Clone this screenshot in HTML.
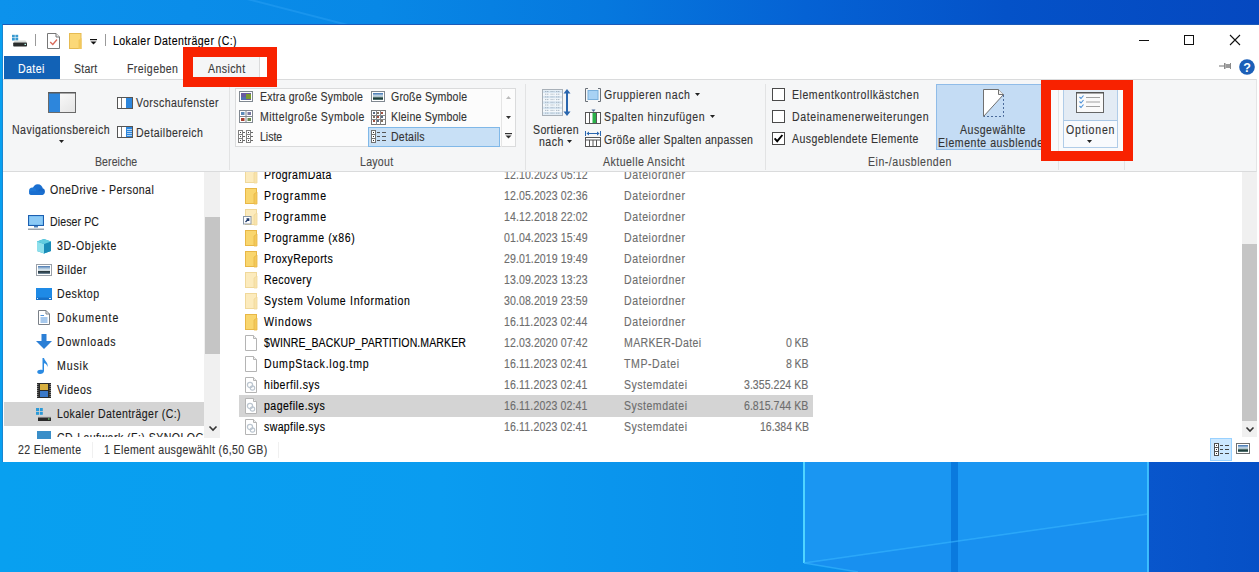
<!DOCTYPE html>
<html><head><meta charset="utf-8">
<style>
*{margin:0;padding:0;box-sizing:border-box}
html,body{width:1259px;height:572px;overflow:hidden}
body{position:relative;font-family:"Liberation Sans",sans-serif;font-size:12px;
 background:linear-gradient(90deg,#0a90ea 0%,#0a86e4 35%,#0466d8 60%,#0350c8 80%,#0444bc 100%);}
.abs{position:absolute}
.t{position:absolute;white-space:nowrap;line-height:16px;font-size:12px;transform-origin:0 0;-webkit-text-stroke:0.12px currentColor}
svg{position:absolute;overflow:visible}
</style></head><body>
<!-- desktop bottom -->
<svg style="left:0;top:0" width="1259" height="572" viewBox="0 0 1259 572">
<defs>
<linearGradient id="dtop" x1="0" y1="0" x2="1" y2="0">
<stop offset="0" stop-color="#0c92ec"/><stop offset="0.3" stop-color="#0888e6"/><stop offset="0.48" stop-color="#0678de"/>
<stop offset="0.64" stop-color="#0562d4"/><stop offset="0.8" stop-color="#0452c8"/><stop offset="1" stop-color="#0548c0"/>
</linearGradient>
<linearGradient id="dbot" x1="0" y1="0" x2="1" y2="0">
<stop offset="0" stop-color="#08a0f0"/><stop offset="0.35" stop-color="#0a9cf0"/><stop offset="0.62" stop-color="#0a8eea"/><stop offset="1" stop-color="#0a88e8"/>
</linearGradient>
<linearGradient id="dright" x1="0" y1="0" x2="1" y2="0">
<stop offset="0" stop-color="#0856cc"/><stop offset="1" stop-color="#0650c6"/>
</linearGradient>
</defs>
<rect x="0" y="0" width="1259" height="30" fill="url(#dtop)"/>
<path d="M255 0 L348 24 L340 24 L247 0 Z" fill="#2aa0f4" opacity="0.5"/>
<rect x="0" y="455" width="1259" height="117" fill="url(#dbot)"/>
<rect x="0" y="24" width="3" height="440" fill="#07a0f0"/>
<rect x="1148" y="455" width="111" height="117" fill="url(#dright)"/>
<path d="M804 455 H1148 V514 L804 563 Z" fill="#1a96f2"/>
<path d="M804 563 L1148 514 V572 H860 Z" fill="#1890f0"/>
<rect x="951" y="455" width="7" height="117" fill="#0a7ade"/>
<path d="M804 455 V563" stroke="#50d4ff" stroke-width="2" fill="none"/>
<path d="M804 563 L1148 514" stroke="#3ab8ff" stroke-width="1.5" fill="none" opacity="0.6"/>
<path d="M804 563 L858 572" stroke="#3ab8ff" stroke-width="1.5" fill="none" opacity="0.6"/>
<rect x="1147" y="455" width="2" height="117" fill="#40c4ff" opacity="0.9"/>
</svg>
<!-- window -->
<div class="abs" style="left:2px;top:24px;width:1257px;height:438px;background:#fff;border-left:1px solid #1a86d0;border-top:1px solid #1c5ab8"></div>
<!-- tabs -->
<div class="abs" style="left:4px;top:56px;width:56px;height:23px;background:#1262b6"></div>
<div class="abs" style="left:192px;top:57px;width:68px;height:22px;background:#f5f6f7;border-right:1px solid #dadbdc"></div>
<!-- ribbon -->
<div class="abs" style="left:3px;top:79px;width:1254px;height:93px;background:#f5f6f7;border-top:1px solid #dadbdc;border-bottom:1px solid #dadbdc;border-right:1px solid #e4e5e6"></div>
<!-- group separators -->
<div class="abs" style="left:229px;top:84px;width:1px;height:86px;background:#e2e3e4"></div>
<div class="abs" style="left:525px;top:84px;width:1px;height:86px;background:#e2e3e4"></div>
<div class="abs" style="left:765px;top:84px;width:1px;height:86px;background:#e2e3e4"></div>
<div class="abs" style="left:1058px;top:84px;width:1px;height:86px;background:#e2e3e4"></div>
<div class="abs" style="left:1124px;top:84px;width:1px;height:86px;background:#e2e3e4"></div>
<!-- layout gallery -->
<div class="abs" style="left:235px;top:88px;width:281px;height:59px;background:#fcfcfc;border:1px solid #dadbdc"></div>
<div class="abs" style="left:501px;top:88px;width:1px;height:59px;background:#e5e5e5"></div>
<div class="abs" style="left:368px;top:127px;width:132px;height:20px;background:#c8e0f6;border:1px solid #80b8e8"></div>
<!-- Ausgewählte button -->
<div class="abs" style="left:936px;top:84px;width:114px;height:66px;background:#c4dcf4;border:1px solid #90bce8"></div>
<!-- Optionen button -->
<div class="abs" style="left:1051px;top:90px;width:72px;height:61px;background:#f9fafb"></div>
<div class="abs" style="left:1058px;top:90px;width:1px;height:61px;background:#e4e5e6"></div>
<div class="abs" style="left:1063px;top:86px;width:55px;height:62px;background:#f8fafd;border:1px solid #b0cce8"></div>
<div class="abs" style="left:1064px;top:87px;width:53px;height:34px;background:#e3ebf4;border-bottom:1px solid #aac8e6"></div>

<!-- nav pane scrollbar -->
<div class="abs" style="left:204px;top:172px;width:16px;height:266px;background:#f0f0f0"></div>
<div class="abs" style="left:205px;top:217px;width:15px;height:137px;background:#c5c5c5"></div>
<!-- nav selected -->
<div class="abs" style="left:4px;top:402px;width:200px;height:24px;background:#d4d4d4"></div>
<!-- content selected -->
<div class="abs" style="left:239px;top:395px;width:574px;height:22px;background:#d4d4d4"></div>
<!-- content scrollbar -->
<div class="abs" style="left:1242px;top:172px;width:15px;height:265px;background:#f0f0f0"></div>
<div class="abs" style="left:1242px;top:244px;width:15px;height:177px;background:#c5c5c5"></div>
<!-- view buttons -->
<div class="abs" style="left:1210px;top:438px;width:22px;height:23px;background:#cce8ff;border:1px solid #99d1ff"></div>

<svg style="left:11px;top:34px" width="17" height="13" viewBox="0 0 17 13" ><rect x="1" y="0.8" width="2.8" height="2.6" fill="#3a9ad0"/><rect x="4.4" y="0.8" width="2.8" height="2.6" fill="#3a9ad0"/><rect x="1" y="3.9" width="2.8" height="2.6" fill="#3a9ad0"/><rect x="4.4" y="3.9" width="2.8" height="2.6" fill="#3a9ad0"/><path d="M4 6.5 H14.5 L16 8.5 H2.5 Z" fill="#d8dcd8"/><rect x="2.2" y="8.5" width="13.8" height="4" rx="0.8" fill="#2a2c2c"/><rect x="13.5" y="9.8" width="1.5" height="1.2" fill="#bfe"/></svg>
<svg style="left:35px;top:34px" width="1" height="12" viewBox="0 0 1 12" ><rect x="0" y="0" width="1" height="12" fill="#9a9a9a"/></svg>
<svg style="left:47px;top:33px" width="13" height="16" viewBox="0 0 13 16" ><path d="M0.5 0.5 H9 L12.5 4 V15.5 H0.5 Z" fill="#fff" stroke="#777"/><path d="M9 0.5 V4 H12.5" fill="#eee" stroke="#777"/><path d="M3.2 9 L5.8 11.5 L10 6.5" stroke="#d86858" stroke-width="1.3" fill="none"/></svg>
<svg style="left:69px;top:33px" width="13" height="16" viewBox="0 0 13 16" ><rect x="0.5" y="0.5" width="11.5" height="15" fill="#fbd878" stroke="#e6bb52"/><path d="M9.5 7 L12.5 5 L12.5 16 L9.5 16 Z" fill="#f2c85c"/></svg>
<svg style="left:90px;top:39px" width="7" height="6" viewBox="0 0 7 6" ><rect x="0" y="0" width="7" height="1.2" fill="#111"/><path d="M0.5 2.5 H6.5 L3.5 5.5 Z" fill="#111"/></svg>
<svg style="left:105px;top:34px" width="1" height="12" viewBox="0 0 1 12" ><rect x="0" y="0" width="1" height="12" fill="#9a9a9a"/></svg>
<svg style="left:1139px;top:40px" width="10" height="1" viewBox="0 0 10 1" ><rect x="0" y="0" width="10" height="1" fill="#111"/></svg>
<svg style="left:1184px;top:35px" width="10" height="10" viewBox="0 0 10 10" ><rect x="0.5" y="0.5" width="9" height="9" fill="none" stroke="#111"/></svg>
<svg style="left:1230px;top:35px" width="10" height="10" viewBox="0 0 10 10" ><path d="M0 0 L10 10 M10 0 L0 10" stroke="#111" stroke-width="1.1"/></svg>
<svg style="left:1219px;top:62px" width="12" height="8" viewBox="0 0 12 8" ><path d="M0 4 H5" stroke="#8a8a8a" stroke-width="1.2"/><rect x="5" y="1" width="1.5" height="6" fill="#8a8a8a"/><rect x="6.5" y="2" width="5" height="4" fill="#9a9a9a"/><rect x="11" y="1" width="1" height="6" fill="#8a8a8a"/></svg>
<svg style="left:1239px;top:59px" width="16" height="16" viewBox="0 0 16 16" ><circle cx="8" cy="8" r="7.8" fill="#1b5fb8"/><text x="8" y="12.6" font-family="Liberation Sans" font-weight="bold" font-size="12.5" fill="#fff" text-anchor="middle">?</text></svg>
<svg style="left:48px;top:92px" width="28" height="21" viewBox="0 0 28 21" ><defs><linearGradient id="gw" x1="0" y1="0" x2="1" y2="1"><stop offset="0" stop-color="#fff"/><stop offset="1" stop-color="#e4e4e4"/></linearGradient></defs><rect x="0.5" y="0.5" width="27" height="20" fill="url(#gw)" stroke="#6a6a6a"/><rect x="1" y="1" width="11" height="19" fill="#2d86dc"/><rect x="0" y="0" width="28" height="1.5" fill="#5a5a5a"/></svg>
<svg style="left:117px;top:97px" width="16" height="12" viewBox="0 0 16 12" ><rect x="0.5" y="0.5" width="15" height="11" fill="#fff" stroke="#555"/><rect x="4" y="1" width="1" height="10" fill="#777"/><rect x="9" y="1" width="6" height="10" fill="#2d86dc"/></svg>
<svg style="left:117px;top:126px" width="16" height="12" viewBox="0 0 16 12" ><rect x="0.5" y="0.5" width="15" height="11" fill="#fff" stroke="#555"/><rect x="4" y="1" width="1" height="10" fill="#777"/><rect x="9" y="1" width="6" height="10" fill="#2d86dc"/><path d="M10 3.5 H15 M10 5.5 H15 M10 7.5 H15 M10 9.5 H15" stroke="#cfe6fb" stroke-width="0.8"/></svg>
<svg style="left:239px;top:91px" width="14" height="11" viewBox="0 0 14 11" ><rect x="0.5" y="0.5" width="13" height="10" fill="#fff" stroke="#808890"/><rect x="2" y="2" width="10" height="7" fill="#6a5aa0"/><rect x="7" y="3" width="5" height="5" fill="#7a9a30"/><rect x="2" y="6" width="5" height="3" fill="#5070b0"/></svg>
<svg style="left:239px;top:110px" width="14" height="13" viewBox="0 0 14 13" ><rect x="0.5" y="0.5" width="13" height="12" fill="#fff" stroke="#808890"/><path d="M7 0.5 V12.5 M0.5 6.5 H13.5" stroke="#808890"/><rect x="2" y="2" width="3.5" height="3" fill="#5a8ab8"/><rect x="8.5" y="2" width="3.5" height="3" fill="#7a78a0"/><rect x="2" y="8" width="3.5" height="3" fill="#a84030"/><rect x="8.5" y="8" width="3.5" height="3" fill="#6a8a50"/></svg>
<svg style="left:238px;top:130px" width="16" height="13" viewBox="0 0 16 13" ><rect x="0.5" y="0.5" width="4" height="12" fill="#fff" stroke="#808080"/><path d="M0.5 4.5 H4.5 M0.5 8.5 H4.5" stroke="#808080"/><rect x="2" y="2.0" width="1" height="1" fill="#444"/><path d="M5 2.5 H7" stroke="#666"/><rect x="2" y="6.0" width="1" height="1" fill="#444"/><path d="M5 6.5 H7" stroke="#666"/><rect x="2" y="10.0" width="1" height="1" fill="#444"/><path d="M5 10.5 H7" stroke="#666"/><rect x="8.5" y="0.5" width="4" height="12" fill="#fff" stroke="#808080"/><path d="M8.5 4.5 H12.5 M8.5 8.5 H12.5" stroke="#808080"/><rect x="10" y="2.0" width="1" height="1" fill="#444"/><path d="M13 2.5 H15" stroke="#666"/><rect x="10" y="6.0" width="1" height="1" fill="#444"/><path d="M13 6.5 H15" stroke="#666"/><rect x="10" y="10.0" width="1" height="1" fill="#444"/><path d="M13 10.5 H15" stroke="#666"/></svg>
<svg style="left:371px;top:91px" width="14" height="11" viewBox="0 0 14 11" ><defs><linearGradient id="gs" x1="0" y1="0" x2="0" y2="1"><stop offset="0" stop-color="#3a70b0"/><stop offset="0.45" stop-color="#d8e6f0"/><stop offset="0.62" stop-color="#5a7a78"/><stop offset="0.8" stop-color="#1a3a38"/><stop offset="1" stop-color="#6a8a88"/></linearGradient></defs><rect x="0.5" y="0.5" width="13" height="10" fill="#fff" stroke="#808890"/><rect x="2" y="2" width="10" height="7" fill="url(#gs)"/></svg>
<svg style="left:371px;top:110px" width="15" height="15" viewBox="0 0 15 15" ><rect x="0.5" y="0.5" width="14" height="14" fill="#fff" stroke="#777"/><path d="M5.5 0.5 V14.5 M9.5 0.5 V14.5 M0.5 5.5 H14.5 M0.5 9.5 H14.5" stroke="#8a8a8a" stroke-width="1"/><rect x="2" y="2" width="2" height="2" fill="#5a6a80"/><rect x="2" y="6" width="2" height="2" fill="#807060"/><rect x="2" y="10" width="2" height="2" fill="#a05040"/><rect x="6" y="2" width="2" height="2" fill="#807060"/><rect x="6" y="6" width="2" height="2" fill="#a05040"/><rect x="6" y="10" width="2" height="2" fill="#5a6a80"/><rect x="10" y="2" width="2" height="2" fill="#a05040"/><rect x="10" y="6" width="2" height="2" fill="#5a6a80"/><rect x="10" y="10" width="2" height="2" fill="#807060"/></svg>
<svg style="left:371px;top:130px" width="15" height="13" viewBox="0 0 15 13" ><rect x="0.5" y="0.5" width="4" height="12" fill="#fff" stroke="#707070"/><path d="M0.5 4.5 H4.5 M0.5 8.5 H4.5" stroke="#707070"/><rect x="2" y="2.0" width="1" height="1" fill="#333"/><path d="M6 2.5 H9 M11 2.5 H15" stroke="#555"/><rect x="2" y="6.0" width="1" height="1" fill="#333"/><path d="M6 6.5 H9 M11 6.5 H15" stroke="#555"/><rect x="2" y="10.0" width="1" height="1" fill="#333"/><path d="M6 10.5 H9 M11 10.5 H15" stroke="#555"/></svg>
<svg style="left:506px;top:96px" width="5" height="3" viewBox="0 0 5 3" ><path d="M0 3 L2.5 0 L5 3 Z" fill="#bbb"/></svg>
<svg style="left:506px;top:116px" width="5" height="3" viewBox="0 0 5 3" ><path d="M0 0 H5 L2.5 3 Z" fill="#333"/></svg>
<svg style="left:505px;top:133px" width="7" height="6" viewBox="0 0 7 6" ><rect x="0" y="0" width="7" height="1.2" fill="#333"/><path d="M0.5 2.5 H6.5 L3.5 5.5 Z" fill="#333"/></svg>
<svg style="left:542px;top:89px" width="21" height="27" viewBox="0 0 21 27" ><rect x="0.5" y="0.5" width="20" height="26" fill="#f4f8fb" stroke="#a8b0b8"/><rect x="1" y="1.5" width="19" height="2.5" fill="#d8e6f2"/><path d="M3 2.5 H7 M8.5 2.5 H12.5 M14 2.5 H18" stroke="#98a8b8" stroke-width="0.8" stroke-dasharray="1.2 0.6"/><rect x="1" y="4.2" width="19" height="2.5" fill="#f4f8fb"/><path d="M3 5.2 H7 M8.5 5.2 H12.5 M14 5.2 H18" stroke="#98a8b8" stroke-width="0.8" stroke-dasharray="1.2 0.6"/><rect x="1" y="6.9" width="19" height="2.5" fill="#d8e6f2"/><path d="M3 7.9 H7 M8.5 7.9 H12.5 M14 7.9 H18" stroke="#98a8b8" stroke-width="0.8" stroke-dasharray="1.2 0.6"/><rect x="1" y="9.600000000000001" width="19" height="2.5" fill="#f4f8fb"/><path d="M3 10.600000000000001 H7 M8.5 10.600000000000001 H12.5 M14 10.600000000000001 H18" stroke="#98a8b8" stroke-width="0.8" stroke-dasharray="1.2 0.6"/><rect x="1" y="12.3" width="19" height="2.5" fill="#d8e6f2"/><path d="M3 13.3 H7 M8.5 13.3 H12.5 M14 13.3 H18" stroke="#98a8b8" stroke-width="0.8" stroke-dasharray="1.2 0.6"/><rect x="1" y="15.0" width="19" height="2.5" fill="#f4f8fb"/><path d="M3 16.0 H7 M8.5 16.0 H12.5 M14 16.0 H18" stroke="#98a8b8" stroke-width="0.8" stroke-dasharray="1.2 0.6"/><rect x="1" y="17.700000000000003" width="19" height="2.5" fill="#d8e6f2"/><path d="M3 18.700000000000003 H7 M8.5 18.700000000000003 H12.5 M14 18.700000000000003 H18" stroke="#98a8b8" stroke-width="0.8" stroke-dasharray="1.2 0.6"/><rect x="1" y="20.400000000000002" width="19" height="2.5" fill="#f4f8fb"/><path d="M3 21.400000000000002 H7 M8.5 21.400000000000002 H12.5 M14 21.400000000000002 H18" stroke="#98a8b8" stroke-width="0.8" stroke-dasharray="1.2 0.6"/><rect x="1" y="23.1" width="19" height="2.5" fill="#d8e6f2"/><path d="M3 24.1 H7 M8.5 24.1 H12.5 M14 24.1 H18" stroke="#98a8b8" stroke-width="0.8" stroke-dasharray="1.2 0.6"/></svg>
<svg style="left:563px;top:89px" width="8" height="27" viewBox="0 0 8 27" ><path d="M4 2 V25" stroke="#2a66ae" stroke-width="2"/><path d="M0.5 4.5 L4 0 L7.5 4.5 Z M0.5 22.5 L4 27 L7.5 22.5 Z" fill="#2a66ae"/></svg>
<svg style="left:585px;top:88px" width="16" height="14" viewBox="0 0 16 14" ><path d="M3 0.5 H0.5 V13.5 H3 M13 0.5 H15.5 V13.5 H13" stroke="#6a7078" fill="none"/><rect x="3" y="2.5" width="10" height="9" fill="#a8d2f4" stroke="#7ab0dc"/></svg>
<svg style="left:585px;top:109px" width="16" height="15" viewBox="0 0 16 15" ><rect x="0.5" y="3.5" width="15" height="11" fill="#fff" stroke="#555"/><path d="M4.5 3.5 V14.5 M11.5 3.5 V14.5" stroke="#555"/><rect x="7.5" y="4" width="3.5" height="10" fill="#2ab04a"/><path d="M6.5 0.5 H10.5 L8.5 3 Z" fill="#4a6a9a"/></svg>
<svg style="left:585px;top:131px" width="16" height="16" viewBox="0 0 16 16" ><path d="M0.5 0 V5 M15.5 0 V5" stroke="#2a66ae"/><path d="M2 2.5 H14" stroke="#2a66ae" stroke-width="1"/><path d="M1.5 2.5 L4 0.5 V4.5 Z M14.5 2.5 L12 0.5 V4.5 Z" fill="#2a66ae"/><rect x="0.5" y="6.5" width="15" height="9" fill="#fff" stroke="#555"/><path d="M0.5 9 H15.5" stroke="#555"/><path d="M4.5 9 V15.5 M8 9 V15.5 M11.5 9 V15.5" stroke="#555"/></svg>
<svg style="left:983px;top:89px" width="22" height="28" viewBox="0 0 22 28" ><path d="M0.5 27.5 V0.5 H15.5 L20.5 5.5 Z" fill="#fff" stroke="#707070"/><path d="M15.5 0.5 V5.5 H20.5" fill="#f0f0f0" stroke="#707070"/><path d="M20.5 6 V27.5 H1" stroke="#4a6a9a" stroke-dasharray="2 2" fill="none"/></svg>
<svg style="left:1076px;top:92px" width="28" height="21" viewBox="0 0 28 21" ><rect x="0.5" y="0.5" width="27" height="20" fill="#fafafa" stroke="#666"/><rect x="0" y="0" width="28" height="1.5" fill="#555"/><path d="M3.5 5 L5 6.5 L7.5 3.5" stroke="#4a90d8" stroke-width="1.1" fill="none"/><path d="M10 5.5 H24" stroke="#a0a0a0"/><path d="M3.5 9.5 L5 11.0 L7.5 8.0" stroke="#4a90d8" stroke-width="1.1" fill="none"/><path d="M10 10.0 H24" stroke="#a0a0a0"/><path d="M3.5 14 L5 15.5 L7.5 12.5" stroke="#4a90d8" stroke-width="1.1" fill="none"/><path d="M10 14.5 H24" stroke="#a0a0a0"/></svg>
<svg style="left:1214px;top:443px" width="15" height="13" viewBox="0 0 15 13" ><rect x="0.5" y="0.5" width="4" height="12" fill="#fff" stroke="#505050"/><path d="M0.5 4.5 H4.5 M0.5 8.5 H4.5" stroke="#505050"/><rect x="2" y="2.0" width="1" height="1" fill="#333"/><path d="M6 2.5 H9 M11 2.5 H15" stroke="#444"/><rect x="2" y="6.0" width="1" height="1" fill="#333"/><path d="M6 6.5 H9 M11 6.5 H15" stroke="#444"/><rect x="2" y="10.0" width="1" height="1" fill="#333"/><path d="M6 10.5 H9 M11 10.5 H15" stroke="#444"/></svg>
<svg style="left:1236px;top:443px" width="14" height="11" viewBox="0 0 14 11" ><defs><linearGradient id="gv" x1="0" y1="0" x2="0" y2="1"><stop offset="0" stop-color="#3a70b0"/><stop offset="0.45" stop-color="#d8e6f0"/><stop offset="0.62" stop-color="#5a7a78"/><stop offset="0.8" stop-color="#1a3a38"/><stop offset="1" stop-color="#6a8a88"/></linearGradient></defs><rect x="0.5" y="0.5" width="13" height="10" fill="#fff" stroke="#707070"/><rect x="2" y="2" width="10" height="7" fill="url(#gv)"/></svg>
<svg style="left:209px;top:426px" width="8" height="5" viewBox="0 0 8 5" ><path d="M0.5 0.5 L4 4 L7.5 0.5" stroke="#333" stroke-width="1.6" fill="none"/></svg>
<svg style="left:1246px;top:427px" width="8" height="5" viewBox="0 0 8 5" ><path d="M0.5 0.5 L4 4 L7.5 0.5" stroke="#333" stroke-width="1.6" fill="none"/></svg>
<svg style="left:92px;top:442px" width="1" height="16" viewBox="0 0 1 16" ><rect width="1" height="16" fill="#f0f0f0"/></svg>
<svg style="left:278px;top:442px" width="1" height="16" viewBox="0 0 1 16" ><rect width="1" height="16" fill="#f0f0f0"/></svg>
<svg style="left:772px;top:88px" width="13" height="13" viewBox="0 0 13 13" ><rect x="0.5" y="0.5" width="12" height="12" fill="#fff" stroke="#4a4a4a"/></svg>
<svg style="left:772px;top:110px" width="13" height="13" viewBox="0 0 13 13" ><rect x="0.5" y="0.5" width="12" height="12" fill="#fff" stroke="#4a4a4a"/></svg>
<svg style="left:772px;top:132px" width="13" height="13" viewBox="0 0 13 13" ><rect x="0.5" y="0.5" width="12" height="12" fill="#fff" stroke="#4a4a4a"/><path d="M2.6 6.4 L5.2 9.2 L10.4 3" stroke="#000" stroke-width="1.9" fill="none"/></svg>
<svg style="left:59px;top:140px" width="5" height="3" viewBox="0 0 5 3" ><path d="M0 0 H5 L2.5 3 Z" fill="#222"/></svg>
<svg style="left:567px;top:140px" width="5" height="3" viewBox="0 0 5 3" ><path d="M0 0 H5 L2.5 3 Z" fill="#222"/></svg>
<svg style="left:695px;top:93px" width="5" height="3" viewBox="0 0 5 3" ><path d="M0 0 H5 L2.5 3 Z" fill="#222"/></svg>
<svg style="left:710px;top:115px" width="5" height="3" viewBox="0 0 5 3" ><path d="M0 0 H5 L2.5 3 Z" fill="#222"/></svg>
<svg style="left:1087px;top:140px" width="5" height="3" viewBox="0 0 5 3" ><path d="M0 0 H5 L2.5 3 Z" fill="#222"/></svg>
<div class="t" style="left:113.0px;top:32.9px;color:#000;transform:scaleX(0.88);letter-spacing:0.480px;">Lokaler Datenträger (C:)</div>
<div class="t" style="left:18.4px;top:60.9px;color:#fff;transform:scaleX(0.88);letter-spacing:0.488px;">Datei</div>
<div class="t" style="left:74.4px;top:60.9px;color:#3a3a3a;transform:scaleX(0.88);letter-spacing:0.227px;">Start</div>
<div class="t" style="left:127.4px;top:60.9px;color:#3a3a3a;transform:scaleX(0.88);letter-spacing:0.472px;">Freigeben</div>
<div class="t" style="left:208.3px;top:60.9px;color:#3a3a3a;transform:scaleX(0.88);letter-spacing:0.465px;">Ansicht</div>
<div class="t" style="left:12.4px;top:121.6px;color:#333;transform:scaleX(0.88);letter-spacing:0.517px;">Navigationsbereich</div>
<div class="t" style="left:136.2px;top:95.0px;color:#333;transform:scaleX(0.88);letter-spacing:0.507px;">Vorschaufenster</div>
<div class="t" style="left:136.2px;top:124.5px;color:#333;transform:scaleX(0.88);letter-spacing:0.503px;">Detailbereich</div>
<div class="t" style="left:95.2px;top:154.0px;color:#4a4a4a;transform:scaleX(0.88);letter-spacing:0.087px;">Bereiche</div>
<div class="t" style="left:259.5px;top:89.3px;color:#333;transform:scaleX(0.88);letter-spacing:0.228px;">Extra große Symbole</div>
<div class="t" style="left:259.5px;top:109.1px;color:#333;transform:scaleX(0.88);letter-spacing:0.476px;">Mittelgroße Symbole</div>
<div class="t" style="left:259.5px;top:129.3px;color:#333;transform:scaleX(0.88);letter-spacing:-0.026px;">Liste</div>
<div class="t" style="left:391.2px;top:89.3px;color:#333;transform:scaleX(0.88);letter-spacing:0.197px;">Große Symbole</div>
<div class="t" style="left:391.2px;top:109.1px;color:#333;transform:scaleX(0.88);letter-spacing:0.229px;">Kleine Symbole</div>
<div class="t" style="left:391.2px;top:129.3px;color:#333;transform:scaleX(0.88);letter-spacing:0.246px;">Details</div>
<div class="t" style="left:359.5px;top:154.4px;color:#4a4a4a;transform:scaleX(0.88);letter-spacing:0.321px;">Layout</div>
<div class="t" style="left:532.6px;top:121.8px;color:#333;transform:scaleX(0.88);letter-spacing:0.397px;">Sortieren</div>
<div class="t" style="left:539.4px;top:134.2px;color:#333;transform:scaleX(0.88);letter-spacing:0.538px;">nach</div>
<div class="t" style="left:604.3px;top:87.1px;color:#333;transform:scaleX(0.88);letter-spacing:0.579px;">Gruppieren nach</div>
<div class="t" style="left:604.3px;top:109.4px;color:#333;transform:scaleX(0.88);letter-spacing:0.681px;">Spalten hinzufügen</div>
<div class="t" style="left:604.3px;top:131.7px;color:#333;transform:scaleX(0.88);letter-spacing:0.365px;">Größe aller Spalten anpassen</div>
<div class="t" style="left:602.8px;top:154.4px;color:#4a4a4a;transform:scaleX(0.88);letter-spacing:0.529px;">Aktuelle Ansicht</div>
<div class="t" style="left:792.2px;top:87.2px;color:#333;transform:scaleX(0.88);letter-spacing:0.605px;">Elementkontrollkästchen</div>
<div class="t" style="left:792.2px;top:109.2px;color:#333;transform:scaleX(0.88);letter-spacing:0.663px;">Dateinamenerweiterungen</div>
<div class="t" style="left:792.2px;top:131.2px;color:#333;transform:scaleX(0.88);letter-spacing:0.454px;">Ausgeblendete Elemente</div>
<div class="t" style="left:960.0px;top:121.7px;color:#333;transform:scaleX(0.88);letter-spacing:0.571px;">Ausgewählte</div>
<div class="t" style="left:937.5px;top:134.6px;color:#333;transform:scaleX(0.88);letter-spacing:0.588px;">Elemente ausblenden</div>
<div class="t" style="left:868.3px;top:154.2px;color:#4a4a4a;transform:scaleX(0.88);letter-spacing:0.581px;">Ein-/ausblenden</div>
<div class="t" style="left:1065.5px;top:121.6px;color:#333;transform:scaleX(0.88);letter-spacing:0.915px;">Optionen</div>
<div class="t" style="left:18.4px;top:442.0px;color:#333;transform:scaleX(0.88);letter-spacing:0.423px;">22 Elemente</div>
<div class="t" style="left:103.7px;top:442.0px;color:#333;transform:scaleX(0.88);letter-spacing:0.416px;">1 Element ausgewählt (6,50 GB)</div>
<svg style="left:28px;top:184px" width="17" height="11" viewBox="0 0 17 11" ><circle cx="9.8" cy="5.3" r="5" fill="#1a6fd0"/><circle cx="4.6" cy="7.2" r="3.6" fill="#1f78d8"/><circle cx="13.6" cy="7.6" r="3.3" fill="#1668c8"/><rect x="1.2" y="7.2" width="14.6" height="3.8" rx="1.8" fill="#1a6fd0"/></svg>
<svg style="left:28px;top:215px" width="17" height="15" viewBox="0 0 17 15" ><rect x="0.5" y="0.5" width="15" height="10" fill="#6ab8f0" stroke="#1d5fb0"/><rect x="1.5" y="1.5" width="13" height="8" fill="#8ccaf6"/><rect x="6" y="11" width="4" height="1.5" fill="#4a7fb8"/><rect x="0" y="13.5" width="16" height="1.5" fill="#9aa4ae"/></svg>
<svg style="left:36px;top:238px" width="16" height="16" viewBox="0 0 16 16" ><path d="M1 3.5 L8 1 L15 3.5 L15 13 L8 15.5 L1 13 Z" fill="#27a8c8"/><path d="M1 3.5 L8 6 L8 15.5 L1 13 Z" fill="#8ee0ec"/><path d="M8 6 L15 3.5 L15 13 L8 15.5 Z" fill="#1a8cb8"/><path d="M1 3.5 L8 1 L15 3.5 L8 6 Z" fill="#62cde0"/></svg>
<svg style="left:36px;top:264px" width="16" height="12" viewBox="0 0 16 12" ><defs><linearGradient id="gb" x1="0" y1="0" x2="0" y2="1"><stop offset="0" stop-color="#4a78b0"/><stop offset="0.4" stop-color="#c8dcea"/><stop offset="0.55" stop-color="#e0eaf0"/><stop offset="0.68" stop-color="#2a3a40"/><stop offset="0.85" stop-color="#3a5060"/><stop offset="1" stop-color="#8aa0b0"/></linearGradient></defs><rect x="0.5" y="0.5" width="15" height="11" fill="#fff" stroke="#9aa0a8"/><rect x="2" y="2" width="12" height="8" fill="url(#gb)"/></svg>
<svg style="left:36px;top:288px" width="16" height="12" viewBox="0 0 16 12" ><rect x="0" y="0" width="16" height="12" fill="#1e8ae6"/><rect x="0" y="9.5" width="16" height="2.5" fill="#1670c8"/><rect x="1" y="10" width="1" height="1" fill="#cfe8ff"/><rect x="13" y="10" width="2" height="1" fill="#cfe8ff"/></svg>
<svg style="left:38px;top:310px" width="12" height="15" viewBox="0 0 12 15" ><path d="M0.5 0.5 H8 L11.5 4 V14.5 H0.5 Z" fill="#fff" stroke="#7a8088"/><path d="M8 0.5 V4 H11.5" fill="none" stroke="#7a8088"/><path d="M2.5 5.5 H6 M2.5 8 H9.5 M2.5 10 H9.5 M2.5 12 H9.5" stroke="#3a86d6" stroke-width="0.9"/></svg>
<svg style="left:36px;top:334px" width="16" height="15" viewBox="0 0 16 15" ><path d="M5.5 0 H10.5 V7 H16 L8 15 L0 7 H5.5 Z" fill="#2b7fd6"/></svg>
<svg style="left:37px;top:358px" width="12" height="16" viewBox="0 0 12 16" ><path d="M5.5 0 L7 0 C7.5 3 11.5 4.5 10.5 9 C10 6.5 8.5 5.5 7 5.2 L7 13 C7 15 5 16 3 16 C1 16 0 15 0.3 13.6 C0.6 12 2.8 11.2 5.5 12 Z" fill="#2a8ae2"/></svg>
<svg style="left:37px;top:383px" width="14" height="15" viewBox="0 0 14 15" ><rect x="0" y="0" width="14" height="15" fill="#2a2a2a"/><rect x="3" y="1" width="8" height="6" fill="#d8b040"/><rect x="3" y="8" width="8" height="6" fill="#3a78c8"/><path d="M0.8 1 V14 M13.2 1 V14" stroke="#bbb" stroke-width="0.9" stroke-dasharray="1 1"/></svg>
<svg style="left:35px;top:407px" width="16" height="15" viewBox="0 0 16 15" ><rect x="1" y="1" width="3" height="3" fill="#2a9ad8"/><rect x="4.8" y="1" width="3" height="3" fill="#2a9ad8"/><rect x="1" y="4.8" width="3" height="3" fill="#2a9ad8"/><rect x="4.8" y="4.8" width="3" height="3" fill="#2a9ad8"/><rect x="3" y="9" width="13" height="1.5" fill="#c8c8c8"/><rect x="3" y="10.5" width="13" height="3.5" fill="#2a2a2a"/><rect x="13" y="11.5" width="1.5" height="1" fill="#8f8"/></svg>
<svg style="left:37px;top:431px" width="14" height="8" viewBox="0 0 14 8" ><rect x="0" y="0" width="14" height="8" fill="#3a8ec8"/></svg>
<div class="abs" style="left:4px;top:172px;width:200px;height:265px;overflow:hidden"><div class="t" style="left:45.5px;top:10.2px;color:#1a1a1a;transform:scaleX(0.88);letter-spacing:0.510px;">OneDrive - Personal</div>
<div class="t" style="left:45.5px;top:41.6px;color:#1a1a1a;transform:scaleX(0.88);letter-spacing:0.123px;">Dieser PC</div>
<div class="t" style="left:53.2px;top:65.7px;color:#1a1a1a;transform:scaleX(0.88);letter-spacing:0.748px;">3D-Objekte</div>
<div class="t" style="left:53.2px;top:89.7px;color:#1a1a1a;transform:scaleX(0.88);letter-spacing:0.567px;">Bilder</div>
<div class="t" style="left:53.2px;top:113.7px;color:#1a1a1a;transform:scaleX(0.88);letter-spacing:0.625px;">Desktop</div>
<div class="t" style="left:53.2px;top:137.7px;color:#1a1a1a;transform:scaleX(0.88);letter-spacing:1.034px;">Dokumente</div>
<div class="t" style="left:53.2px;top:161.7px;color:#1a1a1a;transform:scaleX(0.88);letter-spacing:0.903px;">Downloads</div>
<div class="t" style="left:53.2px;top:185.7px;color:#1a1a1a;transform:scaleX(0.88);letter-spacing:1.004px;">Musik</div>
<div class="t" style="left:53.2px;top:209.7px;color:#1a1a1a;transform:scaleX(0.88);letter-spacing:0.567px;">Videos</div>
<div class="t" style="left:53.2px;top:233.7px;color:#1a1a1a;transform:scaleX(0.88);letter-spacing:0.480px;">Lokaler Datenträger (C:)</div>
<div class="t" style="left:53.2px;top:257.7px;color:#1a1a1a;transform:scaleX(0.88);letter-spacing:0.518px;">CD-Laufwerk (F:) SYNOLOGY</div></div>
<div class="abs" style="left:222px;top:172px;width:1020px;height:265px;overflow:hidden"><svg style="left:23px;top:-5px" width="13" height="16" viewBox="0 0 13 16" ><rect x="0.5" y="0.5" width="11" height="15" fill="#fcebbd" stroke="#f0d89a" stroke-width="1"/><path d="M9 6 L12 4 L12 16 L9 16 Z" fill="#f8e3ac" stroke="#f0d89a" stroke-width="0.8"/></svg>
<svg style="left:23px;top:16px" width="13" height="16" viewBox="0 0 13 16" ><rect x="0.5" y="0.5" width="11" height="15" fill="#f9d66e" stroke="#e8b746" stroke-width="1"/><path d="M9 6 L12 4 L12 16 L9 16 Z" fill="#f3c95a" stroke="#e8b746" stroke-width="0.8"/></svg>
<svg style="left:23px;top:37px" width="13" height="16" viewBox="0 0 13 16" ><rect x="0.5" y="0.5" width="11" height="15" fill="#fcebbd" stroke="#f0d89a" stroke-width="1"/><path d="M9 6 L12 4 L12 16 L9 16 Z" fill="#f8e3ac" stroke="#f0d89a" stroke-width="0.8"/></svg>
<svg style="left:21px;top:44px" width="9" height="9" viewBox="0 0 9 9" ><rect x="0.5" y="0.5" width="7.5" height="7.5" fill="#fff" stroke="#8a98a8"/><path d="M2.5 6 L5.5 3 M3.5 2.8 H5.7 V5" stroke="#1f3a6a" stroke-width="1.3" fill="none"/></svg>
<svg style="left:23px;top:58px" width="13" height="16" viewBox="0 0 13 16" ><rect x="0.5" y="0.5" width="11" height="15" fill="#f9d66e" stroke="#e8b746" stroke-width="1"/><path d="M9 6 L12 4 L12 16 L9 16 Z" fill="#f3c95a" stroke="#e8b746" stroke-width="0.8"/></svg>
<svg style="left:23px;top:79px" width="13" height="16" viewBox="0 0 13 16" ><rect x="0.5" y="0.5" width="11" height="15" fill="#f9d66e" stroke="#e8b746" stroke-width="1"/><path d="M9 6 L12 4 L12 16 L9 16 Z" fill="#f3c95a" stroke="#e8b746" stroke-width="0.8"/></svg>
<svg style="left:23px;top:100px" width="13" height="16" viewBox="0 0 13 16" ><rect x="0.5" y="0.5" width="11" height="15" fill="#fcebbd" stroke="#f0d89a" stroke-width="1"/><path d="M9 6 L12 4 L12 16 L9 16 Z" fill="#f8e3ac" stroke="#f0d89a" stroke-width="0.8"/></svg>
<svg style="left:23px;top:121px" width="13" height="16" viewBox="0 0 13 16" ><rect x="0.5" y="0.5" width="11" height="15" fill="#fcebbd" stroke="#f0d89a" stroke-width="1"/><path d="M9 6 L12 4 L12 16 L9 16 Z" fill="#f8e3ac" stroke="#f0d89a" stroke-width="0.8"/></svg>
<svg style="left:23px;top:142px" width="13" height="16" viewBox="0 0 13 16" ><rect x="0.5" y="0.5" width="11" height="15" fill="#f9d66e" stroke="#e8b746" stroke-width="1"/><path d="M9 6 L12 4 L12 16 L9 16 Z" fill="#f3c95a" stroke="#e8b746" stroke-width="0.8"/></svg>
<svg style="left:23px;top:163px" width="12" height="16" viewBox="0 0 12 16" ><path d="M0.5 0.5 H8.5 L11.5 3.5 V15.5 H0.5 Z" fill="#fff" stroke="#b4b4b4"/><path d="M8.5 0.5 V3.5 H11.5" fill="#eee" stroke="#b4b4b4"/></svg>
<svg style="left:23px;top:184px" width="12" height="16" viewBox="0 0 12 16" ><path d="M0.5 0.5 H8.5 L11.5 3.5 V15.5 H0.5 Z" fill="#fff" stroke="#b4b4b4"/><path d="M8.5 0.5 V3.5 H11.5" fill="#eee" stroke="#b4b4b4"/></svg>
<svg style="left:23px;top:205px" width="12" height="16" viewBox="0 0 12 16" ><path d="M0.5 0.5 H8.5 L11.5 3.5 V15.5 H0.5 Z" fill="#fff" stroke="#b4b4b4"/><path d="M8.5 0.5 V3.5 H11.5" fill="#eee" stroke="#b4b4b4"/><circle cx="5" cy="8" r="2.6" fill="none" stroke="#bcc6d0" stroke-width="1.2"/><circle cx="7.5" cy="11" r="2.2" fill="none" stroke="#bcc6d0" stroke-width="1.2"/></svg>
<svg style="left:23px;top:226px" width="12" height="16" viewBox="0 0 12 16" ><path d="M0.5 0.5 H8.5 L11.5 3.5 V15.5 H0.5 Z" fill="#fff" stroke="#b4b4b4"/><path d="M8.5 0.5 V3.5 H11.5" fill="#eee" stroke="#b4b4b4"/><circle cx="5" cy="8" r="2.6" fill="none" stroke="#bcc6d0" stroke-width="1.2"/><circle cx="7.5" cy="11" r="2.2" fill="none" stroke="#bcc6d0" stroke-width="1.2"/></svg>
<svg style="left:23px;top:247px" width="12" height="16" viewBox="0 0 12 16" ><path d="M0.5 0.5 H8.5 L11.5 3.5 V15.5 H0.5 Z" fill="#fff" stroke="#b4b4b4"/><path d="M8.5 0.5 V3.5 H11.5" fill="#eee" stroke="#b4b4b4"/><circle cx="5" cy="8" r="2.6" fill="none" stroke="#bcc6d0" stroke-width="1.2"/><circle cx="7.5" cy="11" r="2.2" fill="none" stroke="#bcc6d0" stroke-width="1.2"/></svg>
<div class="t" style="left:41.5px;top:-5.0px;color:#000;transform:scaleX(0.88);letter-spacing:0.516px;">ProgramData</div>
<div class="t" style="left:281.5px;top:-5.0px;color:#6d6d6d;transform:scaleX(0.88);letter-spacing:0.099px;">12.10.2023 05:12</div>
<div class="t" style="left:401.7px;top:-5.0px;color:#6d6d6d;transform:scaleX(0.88);letter-spacing:0.653px;">Dateiordner</div>
<div class="t" style="left:41.5px;top:16.0px;color:#000;transform:scaleX(0.88);letter-spacing:0.989px;">Programme</div>
<div class="t" style="left:281.5px;top:16.0px;color:#6d6d6d;transform:scaleX(0.88);letter-spacing:0.099px;">12.05.2023 02:36</div>
<div class="t" style="left:401.7px;top:16.0px;color:#6d6d6d;transform:scaleX(0.88);letter-spacing:0.653px;">Dateiordner</div>
<div class="t" style="left:41.5px;top:37.0px;color:#000;transform:scaleX(0.88);letter-spacing:0.989px;">Programme</div>
<div class="t" style="left:281.5px;top:37.0px;color:#6d6d6d;transform:scaleX(0.88);letter-spacing:0.099px;">14.12.2018 22:02</div>
<div class="t" style="left:401.7px;top:37.0px;color:#6d6d6d;transform:scaleX(0.88);letter-spacing:0.653px;">Dateiordner</div>
<div class="t" style="left:41.5px;top:58.0px;color:#000;transform:scaleX(0.88);letter-spacing:0.693px;">Programme (x86)</div>
<div class="t" style="left:281.5px;top:58.0px;color:#6d6d6d;transform:scaleX(0.88);letter-spacing:0.099px;">01.04.2023 15:49</div>
<div class="t" style="left:401.7px;top:58.0px;color:#6d6d6d;transform:scaleX(0.88);letter-spacing:0.653px;">Dateiordner</div>
<div class="t" style="left:41.5px;top:79.0px;color:#000;transform:scaleX(0.88);letter-spacing:0.494px;">ProxyReports</div>
<div class="t" style="left:281.5px;top:79.0px;color:#6d6d6d;transform:scaleX(0.88);letter-spacing:0.099px;">29.01.2019 19:49</div>
<div class="t" style="left:401.7px;top:79.0px;color:#6d6d6d;transform:scaleX(0.88);letter-spacing:0.653px;">Dateiordner</div>
<div class="t" style="left:41.5px;top:100.0px;color:#000;transform:scaleX(0.88);letter-spacing:0.482px;">Recovery</div>
<div class="t" style="left:281.5px;top:100.0px;color:#6d6d6d;transform:scaleX(0.88);letter-spacing:0.099px;">13.09.2023 13:23</div>
<div class="t" style="left:401.7px;top:100.0px;color:#6d6d6d;transform:scaleX(0.88);letter-spacing:0.653px;">Dateiordner</div>
<div class="t" style="left:41.5px;top:121.0px;color:#000;transform:scaleX(0.88);letter-spacing:0.794px;">System Volume Information</div>
<div class="t" style="left:281.5px;top:121.0px;color:#6d6d6d;transform:scaleX(0.88);letter-spacing:0.099px;">30.08.2019 23:59</div>
<div class="t" style="left:401.7px;top:121.0px;color:#6d6d6d;transform:scaleX(0.88);letter-spacing:0.653px;">Dateiordner</div>
<div class="t" style="left:41.5px;top:142.0px;color:#000;transform:scaleX(0.88);letter-spacing:0.950px;">Windows</div>
<div class="t" style="left:281.5px;top:142.0px;color:#6d6d6d;transform:scaleX(0.88);letter-spacing:0.154px;">16.11.2023 02:44</div>
<div class="t" style="left:401.7px;top:142.0px;color:#6d6d6d;transform:scaleX(0.88);letter-spacing:0.653px;">Dateiordner</div>
<div class="t" style="left:41.5px;top:163.0px;color:#000;transform:scaleX(0.88);letter-spacing:0.087px;">$WINRE_BACKUP_PARTITION.MARKER</div>
<div class="t" style="left:281.5px;top:163.0px;color:#6d6d6d;transform:scaleX(0.88);letter-spacing:0.099px;">12.03.2020 07:42</div>
<div class="t" style="left:401.7px;top:163.0px;color:#6d6d6d;transform:scaleX(0.88);letter-spacing:0.383px;">MARKER-Datei</div>
<div class="t" style="left:564.2px;top:163.0px;color:#6d6d6d;transform:scaleX(0.88);letter-spacing:-0.169px;">0 KB</div>
<div class="t" style="left:41.5px;top:184.0px;color:#000;transform:scaleX(0.88);letter-spacing:0.892px;">DumpStack.log.tmp</div>
<div class="t" style="left:281.5px;top:184.0px;color:#6d6d6d;transform:scaleX(0.88);letter-spacing:0.154px;">16.11.2023 02:41</div>
<div class="t" style="left:401.7px;top:184.0px;color:#6d6d6d;transform:scaleX(0.88);letter-spacing:0.649px;">TMP-Datei</div>
<div class="t" style="left:564.2px;top:184.0px;color:#6d6d6d;transform:scaleX(0.88);letter-spacing:-0.169px;">8 KB</div>
<div class="t" style="left:41.5px;top:205.0px;color:#000;transform:scaleX(0.88);letter-spacing:0.579px;">hiberfil.sys</div>
<div class="t" style="left:281.5px;top:205.0px;color:#6d6d6d;transform:scaleX(0.88);letter-spacing:0.154px;">16.11.2023 02:41</div>
<div class="t" style="left:401.7px;top:205.0px;color:#6d6d6d;transform:scaleX(0.88);letter-spacing:0.557px;">Systemdatei</div>
<div class="t" style="left:522.2px;top:205.0px;color:#6d6d6d;transform:scaleX(0.88);letter-spacing:0.028px;">3.355.224 KB</div>
<div class="t" style="left:41.5px;top:226.0px;color:#000;transform:scaleX(0.88);letter-spacing:0.524px;">pagefile.sys</div>
<div class="t" style="left:281.5px;top:226.0px;color:#6d6d6d;transform:scaleX(0.88);letter-spacing:0.154px;">16.11.2023 02:41</div>
<div class="t" style="left:401.7px;top:226.0px;color:#6d6d6d;transform:scaleX(0.88);letter-spacing:0.557px;">Systemdatei</div>
<div class="t" style="left:522.2px;top:226.0px;color:#6d6d6d;transform:scaleX(0.88);letter-spacing:0.028px;">6.815.744 KB</div>
<div class="t" style="left:41.5px;top:247.0px;color:#000;transform:scaleX(0.88);letter-spacing:0.414px;">swapfile.sys</div>
<div class="t" style="left:281.5px;top:247.0px;color:#6d6d6d;transform:scaleX(0.88);letter-spacing:0.154px;">16.11.2023 02:41</div>
<div class="t" style="left:401.7px;top:247.0px;color:#6d6d6d;transform:scaleX(0.88);letter-spacing:0.557px;">Systemdatei</div>
<div class="t" style="left:537.6px;top:247.0px;color:#6d6d6d;transform:scaleX(0.88);letter-spacing:-0.053px;">16.384 KB</div></div>

<!-- red boxes -->
<div class="abs" style="left:183px;top:47px;width:94px;height:40px;border:10px solid #f82200"></div>
<div class="abs" style="left:1041px;top:80px;width:92px;height:81px;border:10px solid #f82200"></div>
</body></html>
